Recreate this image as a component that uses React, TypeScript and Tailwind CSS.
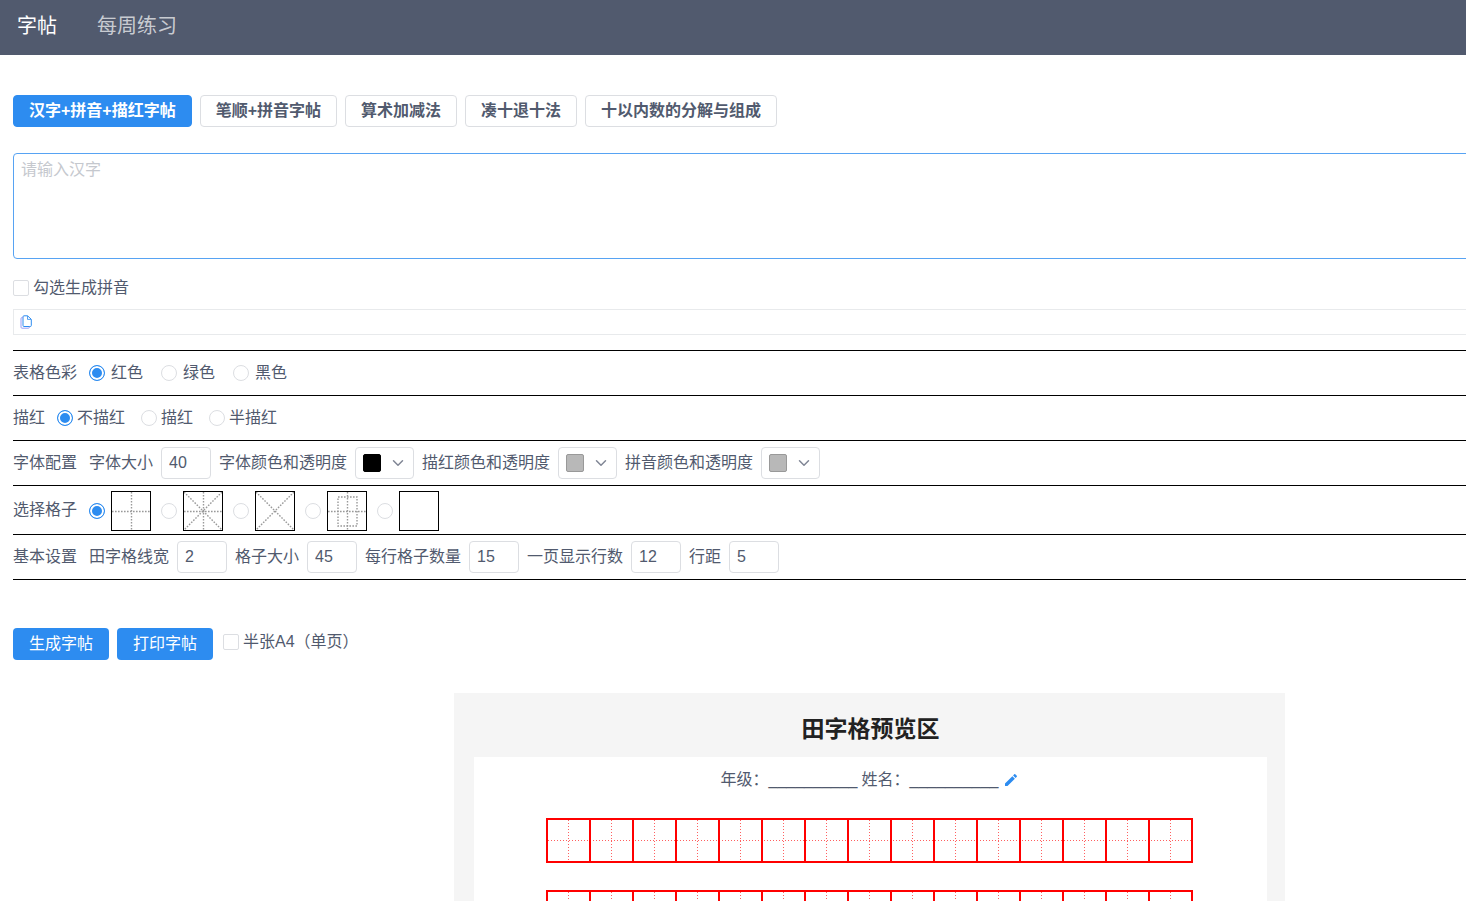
import { useState } from "react";
import { ChevronDown } from "lucide-react";
import { IoMdCreate } from "react-icons/io";

const tabs = ["汉字+拼音+描红字帖", "笔顺+拼音字帖", "算术加减法", "凑十退十法", "十以内数的分解与组成"];

const tableColors = ["红色", "绿色", "黑色"];

const traceModes = ["不描红", "描红", "半描红"];

const colorPickers = [
  { label: "字体颜色和透明度", swatch: "bg-black border-black" },
  { label: "描红颜色和透明度", swatch: "bg-[#b8b8b8] border-[#999]" },
  { label: "拼音颜色和透明度", swatch: "bg-[#b8b8b8] border-[#999]" },
];

const gridTypes = [
  { name: "田字格", paths: ["M20.5 1V39", "M1 20.5H39"] },
  { name: "米字格", paths: ["M20.5 1V39", "M1 20.5H39", "M1 1L39 39", "M39 1L1 39"] },
  { name: "叉字格", paths: ["M1 1L39 39", "M39 1L1 39"] },
  { name: "回宫格", paths: ["M20.5 1V39", "M1 20.5H39", "M11 6H30V35H11Z"] },
  { name: "空白格", paths: [] },
];

const basicSettings = [
  { label: "田字格线宽", value: "2" },
  { label: "格子大小", value: "45" },
  { label: "每行格子数量", value: "15" },
  { label: "一页显示行数", value: "12" },
  { label: "行距", value: "5" },
];

const COLS = 15;
const ROWS = 12;
const PITCH = 43;

const radioClass =
  "size-4 shrink-0 appearance-none rounded-full border border-[#dcdee2] bg-white checked:border-[#2d8cf0] checked:bg-[#2d8cf0] checked:shadow-[inset_0_0_0_2px_#fff]";
const checkboxClass =
  "size-4 shrink-0 appearance-none rounded-xs border border-[#dcdee2] bg-white checked:border-[#2d8cf0] checked:bg-[#2d8cf0]";

function SettingRow({ label, children }: { label: string; children: React.ReactNode }) {
  return (
    <div role="group" aria-label={label} className="flex min-h-[45px] items-center border-b border-black">
      <span className="mr-3">{label}</span>
      {children}
    </div>
  );
}

function NumberField({ label, value }: { label: string; value: string }) {
  return (
    <label className="flex items-center gap-2">
      <span>{label}</span>
      <input
        type="text"
        defaultValue={value}
        className="h-8 w-[50px] rounded border border-[#dcdee2] px-[7px] outline-none"
      />
    </label>
  );
}

function CopyIcon() {
  return (
    <svg className="h-3.5 w-3" viewBox="0 0 12 14" fill="none" stroke="currentColor">
      <path d="M4 .8H7.6L11.3 4.3V10.5Q11.3 11.5 10.3 11.5H4Q3 11.5 3 10.5V1.8Q3 .8 4 .8Z" />
      <path d="M7.5 1V4.4H11" strokeWidth=".8" />
      <path d="M3 2.6H2Q1 2.6 1 3.6V12.2Q1 13.2 2 13.2H8.4Q9.4 13.2 9.4 12.2V11.5" stroke="#9a9af5" />
    </svg>
  );
}

function PracticeRow() {
  const width = COLS * PITCH + 2;
  return (
    <svg width={width} height={45} viewBox={`0 0 ${width} 45`} fill="none" shapeRendering="crispEdges">
      <path d={`M2 22.5H${width - 2}`} stroke="#ff6060" strokeDasharray="1 2" />
      {Array.from({ length: COLS }, (_, i) => (
        <g key={i}>
          <path d={`M${i * PITCH + 22.5} 2V43`} stroke="#ff6060" strokeDasharray="1 2" />
          <rect x={i * PITCH + 1} y="1" width={PITCH} height="43" stroke="#f00" strokeWidth="2" />
        </g>
      ))}
    </svg>
  );
}

export default function App() {
  const [tab, setTab] = useState(0);

  return (
    <div className="overflow-x-hidden bg-white font-['Liberation_Sans','Noto_Sans_CJK_SC',sans-serif] text-base leading-6 text-[#515a6e]">
      <nav className="flex h-[55px] gap-10 bg-[#515a6e] px-[17px] pt-2.5 text-xl leading-8 text-white/70">
        <a href="#copybook" className="text-white">字帖</a>
        <a href="#weekly">每周练习</a>
      </nav>

      {/* The form is wider than the window and runs off its right edge */}
      <main className="-mr-[273px] px-[13px] pt-10">
        <div className="flex gap-2">
          {tabs.map((name, i) => (
            <button
              key={name}
              onClick={() => setTab(i)}
              className={`h-8 rounded border px-[15px] font-bold ${
                i === tab ? "border-[#2d8cf0] bg-[#2d8cf0] text-white" : "border-[#dcdee2] bg-white"
              }`}
            >
              {name}
            </button>
          ))}
        </div>

        <textarea
          aria-label="汉字"
          placeholder="请输入汉字"
          className="mt-[26px] block h-[106px] w-full resize-none rounded border border-[#57a3f3] px-[7px] py-1 outline-none placeholder:text-[#c5c8ce]"
        />

        <label className="mt-[17px] flex w-fit items-center gap-1">
          <input type="checkbox" className={checkboxClass} />
          勾选生成拼音
        </label>

        <div className="mt-[9px] flex h-[26px] items-center border border-[#e8eaec] px-1.5">
          <button aria-label="复制" className="text-[#2d8cf0]">
            <CopyIcon />
          </button>
        </div>

        <div className="mt-[15px] border-t border-black">
          <SettingRow label="表格色彩">
            <div className="flex gap-[18px]">
              {tableColors.map((name, i) => (
                <label key={name} className="flex items-center gap-1.5">
                  <input type="radio" name="table-color" defaultChecked={i === 0} className={radioClass} />
                  {name}
                </label>
              ))}
            </div>
          </SettingRow>

          <SettingRow label="描红">
            <div className="flex gap-4">
              {traceModes.map((name, i) => (
                <label key={name} className="flex items-center gap-1">
                  <input type="radio" name="trace" defaultChecked={i === 0} className={radioClass} />
                  {name}
                </label>
              ))}
            </div>
          </SettingRow>

          <SettingRow label="字体配置">
            <div className="flex gap-2">
              <NumberField label="字体大小" value="40" />
              {colorPickers.map((picker) => (
                <div key={picker.label} className="flex items-center gap-2">
                  <span>{picker.label}</span>
                  <button
                    aria-label={picker.label}
                    className="flex h-8 w-[59px] items-center gap-2 rounded border border-[#dcdee2] px-[7px]"
                  >
                    <span className={`size-[18px] shrink-0 rounded-xs border ${picker.swatch}`} />
                    <ChevronDown className="size-[18px] shrink-0 text-[#808695]" strokeWidth={2} />
                  </button>
                </div>
              ))}
            </div>
          </SettingRow>

          <SettingRow label="选择格子">
            <div className="flex gap-2.5 pt-[5px] pb-[3px]">
              {gridTypes.map((grid, i) => (
                <label key={grid.name} className="flex items-center gap-1.5">
                  <input
                    type="radio"
                    name="grid"
                    aria-label={grid.name}
                    defaultChecked={i === 0}
                    className={radioClass}
                  />
                  <svg className="size-10 border border-black" viewBox="1 1 38 38" fill="none" stroke="#999">
                    {grid.paths.map((d) => (
                      <path key={d} d={d} strokeWidth="1.4" strokeDasharray="1.6 1.4" />
                    ))}
                  </svg>
                </label>
              ))}
            </div>
          </SettingRow>

          <SettingRow label="基本设置">
            <div className="flex gap-2">
              {basicSettings.map((item) => (
                <NumberField key={item.label} label={item.label} value={item.value} />
              ))}
            </div>
          </SettingRow>
        </div>

        <div className="mt-12 flex items-center gap-2">
          <button className="h-8 rounded bg-[#2d8cf0] px-4 text-white">生成字帖</button>
          <button className="h-8 rounded bg-[#2d8cf0] px-4 text-white">打印字帖</button>
          <label className="ml-0.5 flex items-center gap-1 pb-1">
            <input type="checkbox" className={checkboxClass} />
            半张A4（单页）
          </label>
        </div>

        <section className="mx-auto mt-[33px] w-[831px] bg-[#f5f5f5] pt-5 pr-[18px] pb-5 pl-5">
          <h2 className="text-center text-[23px] leading-8 font-bold text-[#222]">田字格预览区</h2>
          <div className="mt-3 bg-white pt-[11px] pr-0.5 pb-10">
            <div className="flex items-center justify-center gap-1">
              <span>年级：__________</span>
              <span>姓名：__________</span>
              <button aria-label="编辑" className="text-[#2d8cf0]">
                <IoMdCreate className="size-4" />
              </button>
            </div>
            <div className="mt-[26px] flex flex-col items-center gap-[27px]">
              {Array.from({ length: ROWS }, (_, i) => (
                <PracticeRow key={i} />
              ))}
            </div>
          </div>
        </section>
      </main>
    </div>
  );
}
